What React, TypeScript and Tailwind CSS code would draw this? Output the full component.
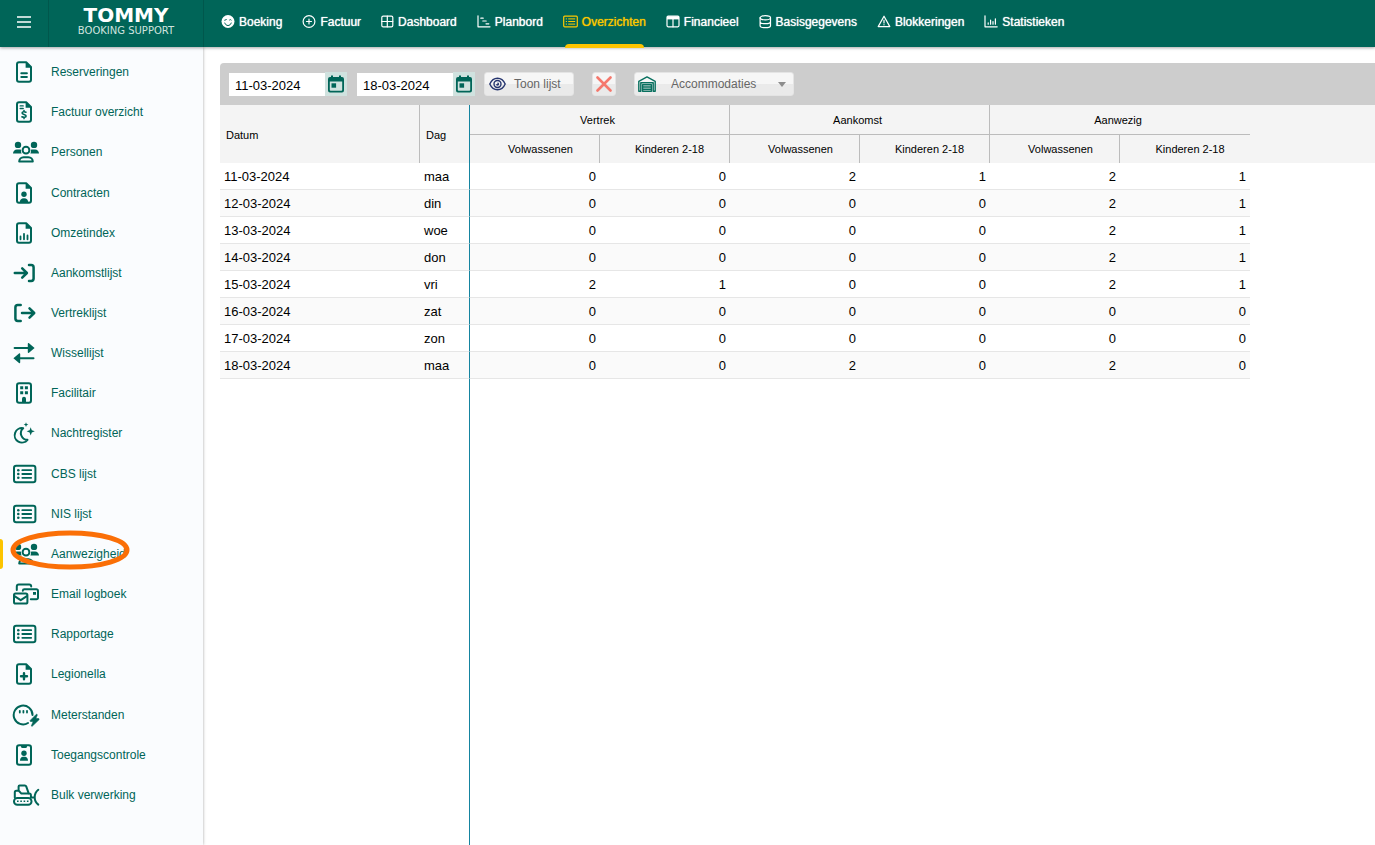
import type { ReactNode } from 'react';

const line = { fill: 'none', stroke: 'currentColor', strokeWidth: 2, strokeLinecap: 'round', strokeLinejoin: 'round' } as const;

const fileShape = (
  <>
    <path {...line} d="M7 2.3h7.2L19 7v12.7a2 2 0 0 1-2 2H7a2 2 0 0 1-2-2V4.3a2 2 0 0 1 2-2Z" />
    <path d="M13.6 2v5.8H20Z" fill="currentColor" />
  </>
);

const people = (
  <>
    <g fill="currentColor">
      <circle cx="6" cy="4.9" r="3.2" />
      <circle cx="22" cy="4.9" r="3.2" />
      <path d="M1 13.6c0-2.4 1.6-4.2 4-4.2h2.2c.7 0 1.3.1 1.8.4-.2 1.400 0 2.600.6 3.800ZM27 13.600c0-2.400-1.600-4.200-4-4.200h-2.200c-.7 0-1.300.1-1.800.4.2 1.400 0 2.600-.6 3.800Z" />
    </g>
    <circle {...line} cx="14" cy="10.200" r="3.400" />
    <path {...line} d="M7.200 21.600c0-2.600 2-4.400 4.400-4.400h4.800c2.400 0 4.400 1.800 4.400 4.400Z" />
  </>
);

const list = (
  <>
    <rect {...line} x="2" y="3.800" width="21.400" height="16.400" rx="2.200" />
    <g fill="currentColor">
      <circle cx="6.300" cy="8.200" r="1.300" />
      <circle cx="6.300" cy="12" r="1.300" />
      <circle cx="6.300" cy="15.800" r="1.300" />
    </g>
    <path {...line} strokeWidth={1.800} d="M10.300 8.200h8.900M10.300 12h8.900M10.300 15.800h8.900" />
  </>
);

type Item = { label: string; icon: ReactNode; active?: boolean };

const sideItems: Item[] = [
  { label: 'Reserveringen', icon: <>{fileShape}<path {...line} d="M9.300 13.300h5.600M9.300 16.900h5.600" /></> },
  {
    label: 'Factuur overzicht',
    icon: (
      <>
        {fileShape}
        <path {...line} strokeWidth={1.400} d="M8.200 5.900h3M8.200 8.500h3" />
        <path {...line} strokeWidth={1.600} d="M14 12.200c-1.500-.7-3.900-.7-3.900.8 0 1.900 4 1.100 4 3.100 0 1.500-2.600 1.500-4.200.7M12 10.500v1M12 17.400v1.200" />
      </>
    ),
  },
  { label: 'Personen', icon: people },
  {
    label: 'Contracten',
    icon: <>{fileShape}<g fill="currentColor"><circle cx="12" cy="13.300" r="2.700" /><path d="M7.600 22c0-3 1.600-4.800 4.400-4.800s4.400 1.800 4.400 4.800Z" /></g></>,
  },
  { label: 'Omzetindex', icon: <>{fileShape}<path {...line} strokeWidth={1.800} d="M8.500 15.500v2.800M12 12.800v5.500M15.500 14.500v3.800" /></> },
  { label: 'Aankomstlijst', icon: <path {...line} strokeWidth={2.500} d="M2.800 12h11.600M10.200 7.300l4.700 4.700-4.700 4.700M17 4h2.200a2.400 2.400 0 0 1 2.400 2.400v11.200a2.400 2.400 0 0 1-2.400 2.400H17" /> },
  { label: 'Vertreklijst', icon: <path {...line} strokeWidth={2.500} d="M10 12h11.800M17.500 7.300l4.700 4.700-4.700 4.700M8.700 4H5.800a2.400 2.400 0 0 0-2.400 2.400v11.200A2.400 2.400 0 0 0 5.800 20h2.900" /> },
  {
    label: 'Wissellijst',
    icon: <><path {...line} d="M2.600 7H17M7 17.300h14.500" /><path d="M17 2.200 22.600 7 17 11.800c-.5.400-1.200.1-1.200-.5V2.700c0-.6.7-.9 1.200-.5ZM7 12.500l-5.600 4.800L7 22.100c.5.400 1.200.1 1.200-.5V13c0-.6-.7-.9-1.200-.5Z" fill="currentColor" /></>,
  },
  {
    label: 'Facilitair',
    icon: <><rect {...line} x="5" y="2.300" width="14" height="19.400" rx="2.200" /><path fill="currentColor" d="M8.200 5.200h3v3h-3ZM12.900 5.200h3v3h-3ZM8.200 10.200h3v3h-3ZM12.900 10.200h3v3h-3ZM10 22v-4.200a2 2 0 0 1 4 0V22Z" /></>,
  },
  {
    label: 'Nachtregister',
    icon: <><path {...line} d="M11.200 7.200a7.200 7.200 0 1 0 4.300 11.600 6.600 6.600 0 0 1-4.300-11.600Z" /><path fill="currentColor" d="m18.700 6.200 1.100 3 3 1.100-3 1.100-1.100 3-1.100-3-3-1.100 3-1.100ZM14 1.200l.7 1.700 1.700.7-1.700.7-.7 1.700-.7-1.700-1.700-.7 1.700-.7Z" /></>,
  },
  { label: 'CBS lijst', icon: list },
  { label: 'NIS lijst', icon: list },
  { label: 'Aanwezigheid', icon: people, active: true },
  {
    label: 'Email logboek',
    icon: (
      <>
        <path {...line} d="M4.800 8V4.500a2 2 0 0 1 2-2h10.400a2 2 0 0 1 2 2M10.800 8.800a1.600 1.600 0 0 1 1.600-1.500h12a1.600 1.600 0 0 1 1.600 1.600v6.800a1.600 1.600 0 0 1-1.600 1.600h-5.600" />
        <path d="M21 10h3v2.800h-3Z" fill="currentColor" />
        <rect {...line} x="2" y="11.500" width="13.400" height="10" rx="1.600" />
        <path {...line} d="m2.500 14.200 6.200 4 6.200-4" />
      </>
    ),
  },
  { label: 'Rapportage', icon: list },
  { label: 'Legionella', icon: <>{fileShape}<path {...line} strokeWidth={2.400} d="M12 11.200v6M9 14.200h6" /></> },
  {
    label: 'Meterstanden',
    icon: (
      <>
        <path {...line} d="M16 20a9.400 9.400 0 1 1 4.500-8" />
        <path {...line} strokeWidth={1.800} d="M7.800 7.800v1.800M11.400 7.800v1.800M15 7.800v1.800" />
        <path d="m24.200 11.400-6 6c-.3.400-.1 1.100.5 1.100h2.500l-1.800 4.200c-.1.500.600.800 1 .4l6.600-6.400c.4-.4.200-1.200-.5-1.200h-2.600l1.400-3.600c.1-.5-.7-.9-1.100-.5Z" fill="currentColor" stroke="currentColor" strokeWidth=".6" />
      </>
    ),
  },
  {
    label: 'Toegangscontrole',
    icon: <><rect {...line} x="5" y="2.300" width="14" height="19.400" rx="2.200" /><path fill="currentColor" d="M9 2h6v1.600a1.500 1.500 0 0 1-1.500 1.500h-3A1.500 1.500 0 0 1 9 3.600ZM8 17.700c0-2.200 1.200-3.900 3-3.900h2c1.800 0 3 1.700 3 3.900Z" /><circle cx="12" cy="10.200" r="2.700" fill="currentColor" /></>,
  },
  {
    label: 'Bulk verwerking',
    icon: (
      <>
        <path {...line} d="M6.600 7.600V3.400a1 1 0 0 1 1-1h5.200a1.500 1.500 0 0 1 1.400 1l2.600 7.200M2.800 14.500V9.300a1.500 1.500 0 0 1 1.500-1.500h2.500l2.600 2.800h8a1.500 1.500 0 0 1 1.500 1.500v2.400M20 14.500h2.500M26.300 6.800c-2.600 2-3.600 4.600-3.600 7.400s1 5.400 3.600 7.400" />
        <rect {...line} x="2" y="15" width="17.500" height="6.700" rx="3.300" />
        <path {...line} strokeWidth={1.600} strokeLinecap="butt" strokeDasharray="1.600 1.700" d="M5 18.300h12.200" />
      </>
    ),
  },
];

const thin = { ...line, strokeWidth: 1.200 };

const navItems: (Item & { size?: 'narrow' | 'wide' })[] = [
  {
    label: 'Boeking',
    icon: <><circle cx="7" cy="6.500" r="6.500" fill="currentColor" /><path d="M3.800 8c.6 1.700 1.700 2.500 3.200 2.500S9.600 9.700 10.200 8M3.700 5.200l1.600-.6M8.500 5c.5-.6 1.200-.6 1.700 0" fill="none" stroke="#006558" strokeWidth="1" strokeLinecap="round" /></>,
  },
  { label: 'Factuur', icon: <><circle {...thin} cx="7" cy="6.500" r="5.900" /><path {...thin} d="M7 4v5M4.500 6.500h5" /></> },
  { label: 'Dashboard', size: 'narrow', icon: <><rect {...thin} x=".8" y="1.200" width="11" height="10.600" rx="1.400" /><path {...thin} d="M6.300 1.200v10.600M.8 6.500h11" /></> },
  { label: 'Planbord', icon: <path {...thin} d="M1 .8v11h12M3.800 3.200h2.400M5.800 6h3.400M9 8.800h2.800" /> },
  {
    label: 'Overzichten',
    active: true,
    size: 'wide',
    icon: <><rect {...thin} x=".7" y="1.200" width="13.600" height="10.600" rx="1" /><path {...thin} strokeWidth={1} d="M3.200 3.900h.4M3.200 6.500h.4M3.200 9.100h.4M5.600 3.900h6.200M5.600 6.500h6.200M5.600 9.100h6.200" /></>,
  },
  { label: 'Financieel', icon: <><rect {...thin} x="1" y="1.200" width="12" height="10.600" rx="1.200" /><path d="M1 1.200h12v3.200H1Z" fill="currentColor" /><path {...thin} d="M7 4v7.800" /></> },
  { label: 'Basisgegevens', size: 'narrow', icon: <><ellipse {...thin} cx="6.300" cy="2.700" rx="5.200" ry="2.100" /><path {...thin} d="M1.100 2.700v8c0 1.100 2.300 2 5.200 2s5.200-.9 5.200-2v-8M1.100 6.700c0 1.100 2.300 2 5.200 2s5.200-.9 5.200-2" /></> },
  { label: 'Blokkeringen', icon: <><path {...thin} d="M7 1.200 1.200 11.600h11.600Z" /><path {...thin} d="M7 5v3M7 9.700v.1" /></> },
  { label: 'Statistieken', icon: <path {...thin} d="M1 .8v11h12.200M4.200 7.800v1.400M6.600 5.200v4M9 6.600v2.600M11.400 3.800v5.400" /> },
];

const iconWidth = { narrow: 13, normal: 14, wide: 15 };

const days: [string, string, number[]][] = [
  ['11-03-2024', 'maa', [0, 0, 2, 1, 2, 1]],
  ['12-03-2024', 'din', [0, 0, 0, 0, 2, 1]],
  ['13-03-2024', 'woe', [0, 0, 0, 0, 2, 1]],
  ['14-03-2024', 'don', [0, 0, 0, 0, 2, 1]],
  ['15-03-2024', 'vri', [2, 1, 0, 0, 2, 1]],
  ['16-03-2024', 'zat', [0, 0, 0, 0, 0, 0]],
  ['17-03-2024', 'zon', [0, 0, 0, 0, 0, 0]],
  ['18-03-2024', 'maa', [0, 0, 2, 0, 2, 0]],
];

const groups = ['Vertrek', 'Aankomst', 'Aanwezig'];

function Header() {
  return (
    <header className="relative z-10 flex h-[47px] shrink-0 bg-[#006558] text-white shadow-[0_1px_3px_rgba(0,0,0,0.35)]">
      <button aria-label="Menu" className="flex w-[49px] shrink-0 items-center justify-center border-r border-[#00574c] pb-[3px]">
        <svg width="14" height="12" viewBox="0 0 14 12">
          <path d="M0 1h14M0 6h14M0 11h14" stroke="currentColor" strokeWidth="1.400" />
        </svg>
      </button>
      <a href="#" className="flex w-[155px] shrink-0 flex-col items-center border-r border-[#00574c] pt-1 font-['DejaVu_Sans',sans-serif]">
        <span className="text-[20px] leading-[22px] font-bold">TOMMY</span>
        <span className="text-[10px] leading-[10px] text-[#cfe3df]">BOOKING SUPPORT</span>
      </a>
      <nav className="flex gap-5 pl-[17px]">
        {navItems.map((n) => {
          const w = iconWidth[n.size ?? 'normal'];
          return (
            <a
              key={n.label}
              href="#"
              className={`relative flex items-center gap-1 pb-[3px] text-[12px] whitespace-nowrap [text-shadow:0_0_1px_currentColor] ${n.active ? 'text-[#fcc800]' : 'text-white'}`}
            >
              <svg width={w} height="14" viewBox={`0 0 ${w} 14`} className="shrink-0">
                {n.icon}
              </svg>
              {n.label}
              {n.active && <span className="absolute inset-x-[2px] -bottom-px h-1 rounded-t-sm bg-[#fcc400]" />}
            </a>
          );
        })}
      </nav>
    </header>
  );
}

function Sidebar() {
  return (
    <aside className="flex w-[203px] shrink-0 flex-col bg-[#fafcfe] shadow-[0_0_3px_rgba(0,0,0,0.35)]">
      <ul className="grid flex-1 auto-rows-fr pt-[5px] pb-[30px]">
        {sideItems.map((s) => (
          <li key={s.label} className="relative flex">
            {s.active && <span className="absolute top-1/2 left-0 h-[30px] w-[3px] -translate-y-1/2 rounded-r-sm bg-[#fcc400]" />}
            <a href="#" className="flex flex-1 items-center gap-[11px] pl-3 text-[12px] text-[#006558]">
              <svg width="28" height="24" viewBox="0 0 28 24" className="shrink-0">
                {s.icon}
              </svg>
              {s.label}
            </a>
            {s.active && (
              <svg width="120" height="40" viewBox="0 0 120 40" className="pointer-events-none absolute -top-1 left-[10px]">
                <ellipse cx="60" cy="20" rx="57" ry="17" fill="none" stroke="#fa6f07" strokeWidth="5" />
              </svg>
            )}
          </li>
        ))}
      </ul>
    </aside>
  );
}

function DateField({ label, value }: { label: string; value: string }) {
  return (
    <div className="flex h-6 items-end">
      <input aria-label={label} defaultValue={value} className="h-[23px] w-24 bg-white px-[6px] pt-px text-[13px] text-black" />
      <button aria-label={`${label} kiezen`} className="flex h-6 w-[22px] items-center justify-center bg-[#d0e2df] text-[#006558]">
        <svg width="16" height="18" viewBox="0 0 16 18">
          <path fill="currentColor" fillRule="evenodd" d="M3 .5h2V2h6V.5h2V2h1a2 2 0 0 1 2 2v11.500a2 2 0 0 1-2 2H2a2 2 0 0 1-2-2V4a2 2 0 0 1 2-2h1ZM1.800 6.500v8.400a.8.800 0 0 0 .8.800h10.800a.8.800 0 0 0 .8-.8V6.500Z" />
          <path fill="currentColor" d="M3.500 8.300h4.600v4.400H3.500Z" />
        </svg>
      </button>
    </div>
  );
}

const soft = 'h-6 rounded-[3px] border border-[#e4e4e4] bg-linear-to-b from-[#f6f6f6] from-50% to-[#eaeaea] to-50% text-[12px] text-[#666]';

function Toolbar() {
  return (
    <div className="flex h-[42px] items-center rounded-tl bg-[#cdcdcd] pl-[9px]">
      <div className="flex gap-[10px]">
        <DateField label="Datum van" value="11-03-2024" />
        <DateField label="Datum tot" value="18-03-2024" />
      </div>
      <button className={`${soft} ml-[9px] flex w-[90px] items-center gap-2 pl-1`}>
        <svg width="17" height="14" viewBox="0 0 17 14" fill="none" stroke="#26356f" strokeWidth="1.400" className="shrink-0">
          <path d="M.8 7C2.500 3.200 5.200 1.200 8.500 1.200S14.500 3.200 16.200 7c-1.700 3.800-4.400 5.800-7.700 5.800S2.500 10.800.8 7Z" />
          <circle cx="8.500" cy="7" r="3.500" />
          <path d="M6.700 7.300c1.300.3 2-.6 1.800-1.900 1 0 1.600.7 1.600 1.600s-.7 1.700-1.600 1.700-1.600-.6-1.800-1.400Z" fill="#26356f" stroke="none" />
        </svg>
        Toon lijst
      </button>
      <button aria-label="Sluiten" className={`${soft} ml-[18px] flex w-6 items-center justify-center`}>
        <svg width="16" height="16" viewBox="0 0 16 16" className="shrink-0">
          <path d="M1.500 1.500l13 13M14.500 1.500l-13 13" stroke="#f5786d" strokeWidth="2.600" strokeLinecap="round" />
        </svg>
      </button>
      <div className="relative ml-[18px]">
        <select aria-label="Soort" className={`${soft} block w-40 appearance-none pl-9`}>
          <option>Accommodaties</option>
        </select>
        <svg width="18" height="16" viewBox="0 0 18 16" className="pointer-events-none absolute top-1 left-1" fill="none" stroke="#08705f" strokeWidth="1.400" strokeLinejoin="round">
          <path d="M.8 15.300V5.300L9 .9l8.200 4.400v10h-2V6.800H2.800v8.500Z" />
          <path d="M4.600 8.800h8.800v6.500H4.600ZM4.600 11h8.800M4.600 13.200h8.800" />
        </svg>
        <svg width="8" height="5" viewBox="0 0 8 5" className="pointer-events-none absolute top-[10px] right-2">
          <path d="M0 0h8L4 5Z" fill="#8d8d8d" />
        </svg>
      </div>
    </div>
  );
}

function Presence() {
  return (
    <table className="w-full table-fixed border-separate border-spacing-0 text-black">
      <colgroup>
        <col className="w-[200px]" />
        <col className="w-[50px]" />
        {days[0][2].map((_, i) => (
          <col key={i} className="w-[130px]" />
        ))}
        <col />
      </colgroup>
      <thead className="bg-[#f4f4f4] text-[11px] leading-4">
        <tr className="h-[30px]">
          <th rowSpan={2} className="border-r border-[#bcbcbc] pt-px pl-[6px] text-left font-normal">Datum</th>
          <th rowSpan={2} className="border-r border-[#1584a0] pt-px pl-[6px] text-left font-normal">Dag</th>
          {groups.map((g, i) => (
            <th key={g} colSpan={2} className={`border-b border-[#bcbcbc] pr-1 font-normal ${i < 2 ? 'border-r' : ''}`}>
              {g}
            </th>
          ))}
          <th rowSpan={2} aria-hidden="true" />
        </tr>
        <tr className="h-[28px]">
          {groups.map((g, i) => [
            <th key={`${g}-v`} className="border-r border-[#bcbcbc] pl-3 font-normal">Volwassenen</th>,
            <th key={`${g}-k`} className={`border-[#bcbcbc] pl-[10px] font-normal ${i < 2 ? 'border-r' : ''}`}>Kinderen 2-18</th>,
          ])}
        </tr>
      </thead>
      <tbody className="text-[13px] leading-4">
        {days.map(([date, day, counts], r) => {
          const cell = `border-b border-b-[#e6e6e6] pt-[2px] ${r % 2 ? 'bg-[#fafafa]' : 'bg-white'}`;
          return (
            <tr key={date} className="h-[27px]">
              <td className={`${cell} pl-1`}>{date}</td>
              <td className={`${cell} border-r border-r-[#1584a0] pl-1`}>{day}</td>
              {counts.map((c, i) => (
                <td key={i} className={`${cell} pr-1 text-right`}>
                  {c}
                </td>
              ))}
              <td />
            </tr>
          );
        })}
      </tbody>
    </table>
  );
}

export default function App() {
  return (
    <div className="flex min-h-screen flex-col bg-white font-['Liberation_Sans',Arial,sans-serif]">
      <Header />
      <div className="flex flex-1">
        <Sidebar />
        <main className="flex min-w-0 flex-1 flex-col pt-4 pl-[17px]">
          <Toolbar />
          <Presence />
          <div className="w-[250px] flex-1 border-r border-[#1584a0]" />
        </main>
      </div>
    </div>
  );
}
